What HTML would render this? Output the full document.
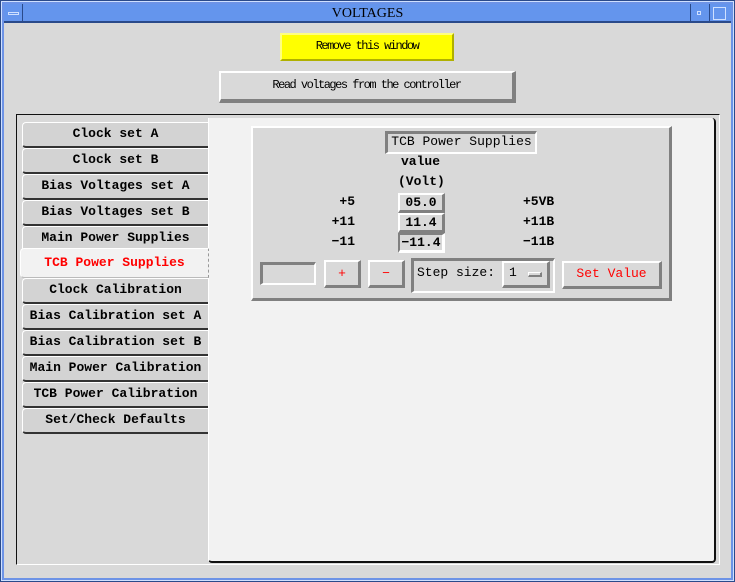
<!DOCTYPE html>
<html><head><meta charset="utf-8"><style>
*{box-sizing:border-box;margin:0;padding:0}
body{width:735px;height:582px;background:#d9d9d9;position:relative;overflow:hidden;font-family:"Liberation Mono",monospace;}
.a{position:absolute}
.raised{border-style:solid;border-width:2px 3px 3px 2px;border-color:#fff #808080 #808080 #fff;background:#d9d9d9}
.sunk{border-style:solid;border-width:3px 2px 2px 3px;border-color:#808080 #fff #fff #808080;background:#d9d9d9}
.cond{font-size:12px;letter-spacing:-1.5px;color:#000;text-align:center}
.tab{position:absolute;left:22px;width:186px;height:26px;background:#d3d3d3;border-left:1px solid #fff;border-top:1px solid #fff;border-bottom:2px solid #333;border-top-left-radius:4px;border-bottom-left-radius:4px;font-weight:bold;font-size:13px;text-align:center;line-height:22px;color:#000;white-space:nowrap}
.t{position:absolute;font-size:13px;font-weight:bold;color:#000;white-space:nowrap}
</style></head><body>
<!-- window frame -->
<div class="a" style="left:0;top:0;width:735px;height:582px;border:4px solid #6d93e6;outline:1px solid #2a4a8a;outline-offset:-1px"></div>
<div class="a" style="left:1px;top:1px;width:733px;height:580px;border:1px solid #cfe0ff"></div>
<div class="a" style="left:4px;top:4px;width:727px;height:19px;background:#6495ed;border-bottom:2px solid #2a4a8a"></div>
<div class="a" style="left:22px;top:4px;width:1px;height:19px;background:#2a4a8a"></div>
<div class="a" style="left:8px;top:12px;width:11px;height:3px;border:1px solid #cfe0ff;background:#6495ed"></div>
<div class="a" style="left:690px;top:4px;width:1px;height:19px;background:#2a4a8a"></div>
<div class="a" style="left:709px;top:4px;width:1px;height:19px;background:#2a4a8a"></div>
<div class="a" style="left:697px;top:11px;width:4px;height:4px;border:1px solid #cfe0ff"></div>
<div class="a" style="left:713px;top:7px;width:13px;height:13px;border:1px solid #cfe0ff"></div>
<div class="a" style="left:0;top:6px;width:735px;text-align:center;font-family:'Liberation Serif',serif;font-size:14px;color:#000">VOLTAGES</div>

<!-- top buttons -->
<div class="a cond" style="left:280px;top:33px;width:174px;height:28px;background:#ffff00;border:2px solid;border-color:#ffff80 #b0b000 #b0b000 #ffff80;line-height:23px">Remove this window</div>
<div class="a cond raised" style="left:219px;top:71px;width:297px;height:32px;line-height:25px;border-width:2px 4px 4px 2px">Read voltages from the controller</div>

<!-- group box -->
<div class="a" style="left:16px;top:114px;width:704px;height:451px;border-top:1px solid #111;border-left:1px solid #111;border-right:1px solid #fff;border-bottom:1px solid #fff"></div>
<div class="a" style="left:208px;top:118px;width:508px;height:445px;background:#f2f2f2;border-right:2px solid #111;border-bottom:2px solid #111;border-radius:0 4px 4px 4px;border-left:1px solid #fff"></div>

<!-- tabs -->
<div class="tab" style="top:122px">Clock set A</div>
<div class="tab" style="top:148px">Clock set B</div>
<div class="tab" style="top:174px">Bias Voltages set A</div>
<div class="tab" style="top:200px">Bias Voltages set B</div>
<div class="tab" style="top:226px;border-bottom:none">Main Power Supplies</div>
<div class="tab" style="top:248px;left:20px;width:189px;height:30px;background:#f2f2f2;color:#f00;border-bottom:1px solid #bbb;line-height:28px;border-right:1px dashed #999">TCB Power Supplies</div>
<div class="tab" style="top:278px">Clock Calibration</div>
<div class="tab" style="top:304px">Bias Calibration set A</div>
<div class="tab" style="top:330px">Bias Calibration set B</div>
<div class="tab" style="top:356px">Main Power Calibration</div>
<div class="tab" style="top:382px">TCB Power Calibration</div>
<div class="tab" style="top:408px">Set/Check Defaults</div>

<!-- inner panel -->
<div class="a" style="left:251px;top:126px;width:421px;height:175px;background:#d9d9d9;border-style:solid;border-width:2px 3px 3px 2px;border-color:#fff #808080 #808080 #fff"></div>
<div class="a sunk t" style="left:385px;top:131px;width:152px;height:23px;font-weight:normal;text-align:center;line-height:16px;border-color:#808080 #fff #fff #808080">TCB Power Supplies</div>
<div class="t" style="left:401px;top:154px">value</div>
<div class="t" style="left:398px;top:174px">(Volt)</div>
<div class="t" style="left:300px;top:194px;width:55px;text-align:right">+5</div>
<div class="t" style="left:300px;top:214px;width:55px;text-align:right">+11</div>
<div class="t" style="left:300px;top:234px;width:55px;text-align:right">−11</div>
<div class="t" style="left:523px;top:194px">+5VB</div>
<div class="t" style="left:523px;top:214px">+11B</div>
<div class="t" style="left:523px;top:234px">−11B</div>
<div class="a raised t" style="left:398px;top:193px;width:47px;height:20px;text-align:center;line-height:15px">05.0</div>
<div class="a raised t" style="left:398px;top:213px;width:47px;height:20px;text-align:center;line-height:15px">11.4</div>
<div class="a raised t" style="left:398px;top:233px;width:47px;height:20px;text-align:center;line-height:15px;border-color:#808080 #fff #fff #808080">−11.4</div>

<div class="a sunk" style="left:260px;top:262px;width:56px;height:23px"></div>
<div class="a raised t" style="left:324px;top:260px;width:37px;height:28px;color:#f00;text-align:center;line-height:23px;font-weight:normal">+</div>
<div class="a raised t" style="left:368px;top:260px;width:37px;height:28px;color:#f00;text-align:center;line-height:23px;font-weight:normal">−</div>
<div class="a sunk" style="left:411px;top:258px;width:144px;height:35px"></div>
<div class="t" style="left:417px;top:265px;font-weight:normal">Step size:</div>
<div class="a raised" style="left:502px;top:261px;width:48px;height:27px"></div>
<div class="t" style="left:509px;top:265px;font-weight:normal">1</div>
<div class="a raised" style="left:528px;top:272px;width:14px;height:5px;border-width:1px 2px 2px 1px"></div>
<div class="a raised t" style="left:562px;top:261px;width:100px;height:28px;color:#f00;text-align:center;line-height:22px;font-weight:normal">Set Value</div>
</body></html>
